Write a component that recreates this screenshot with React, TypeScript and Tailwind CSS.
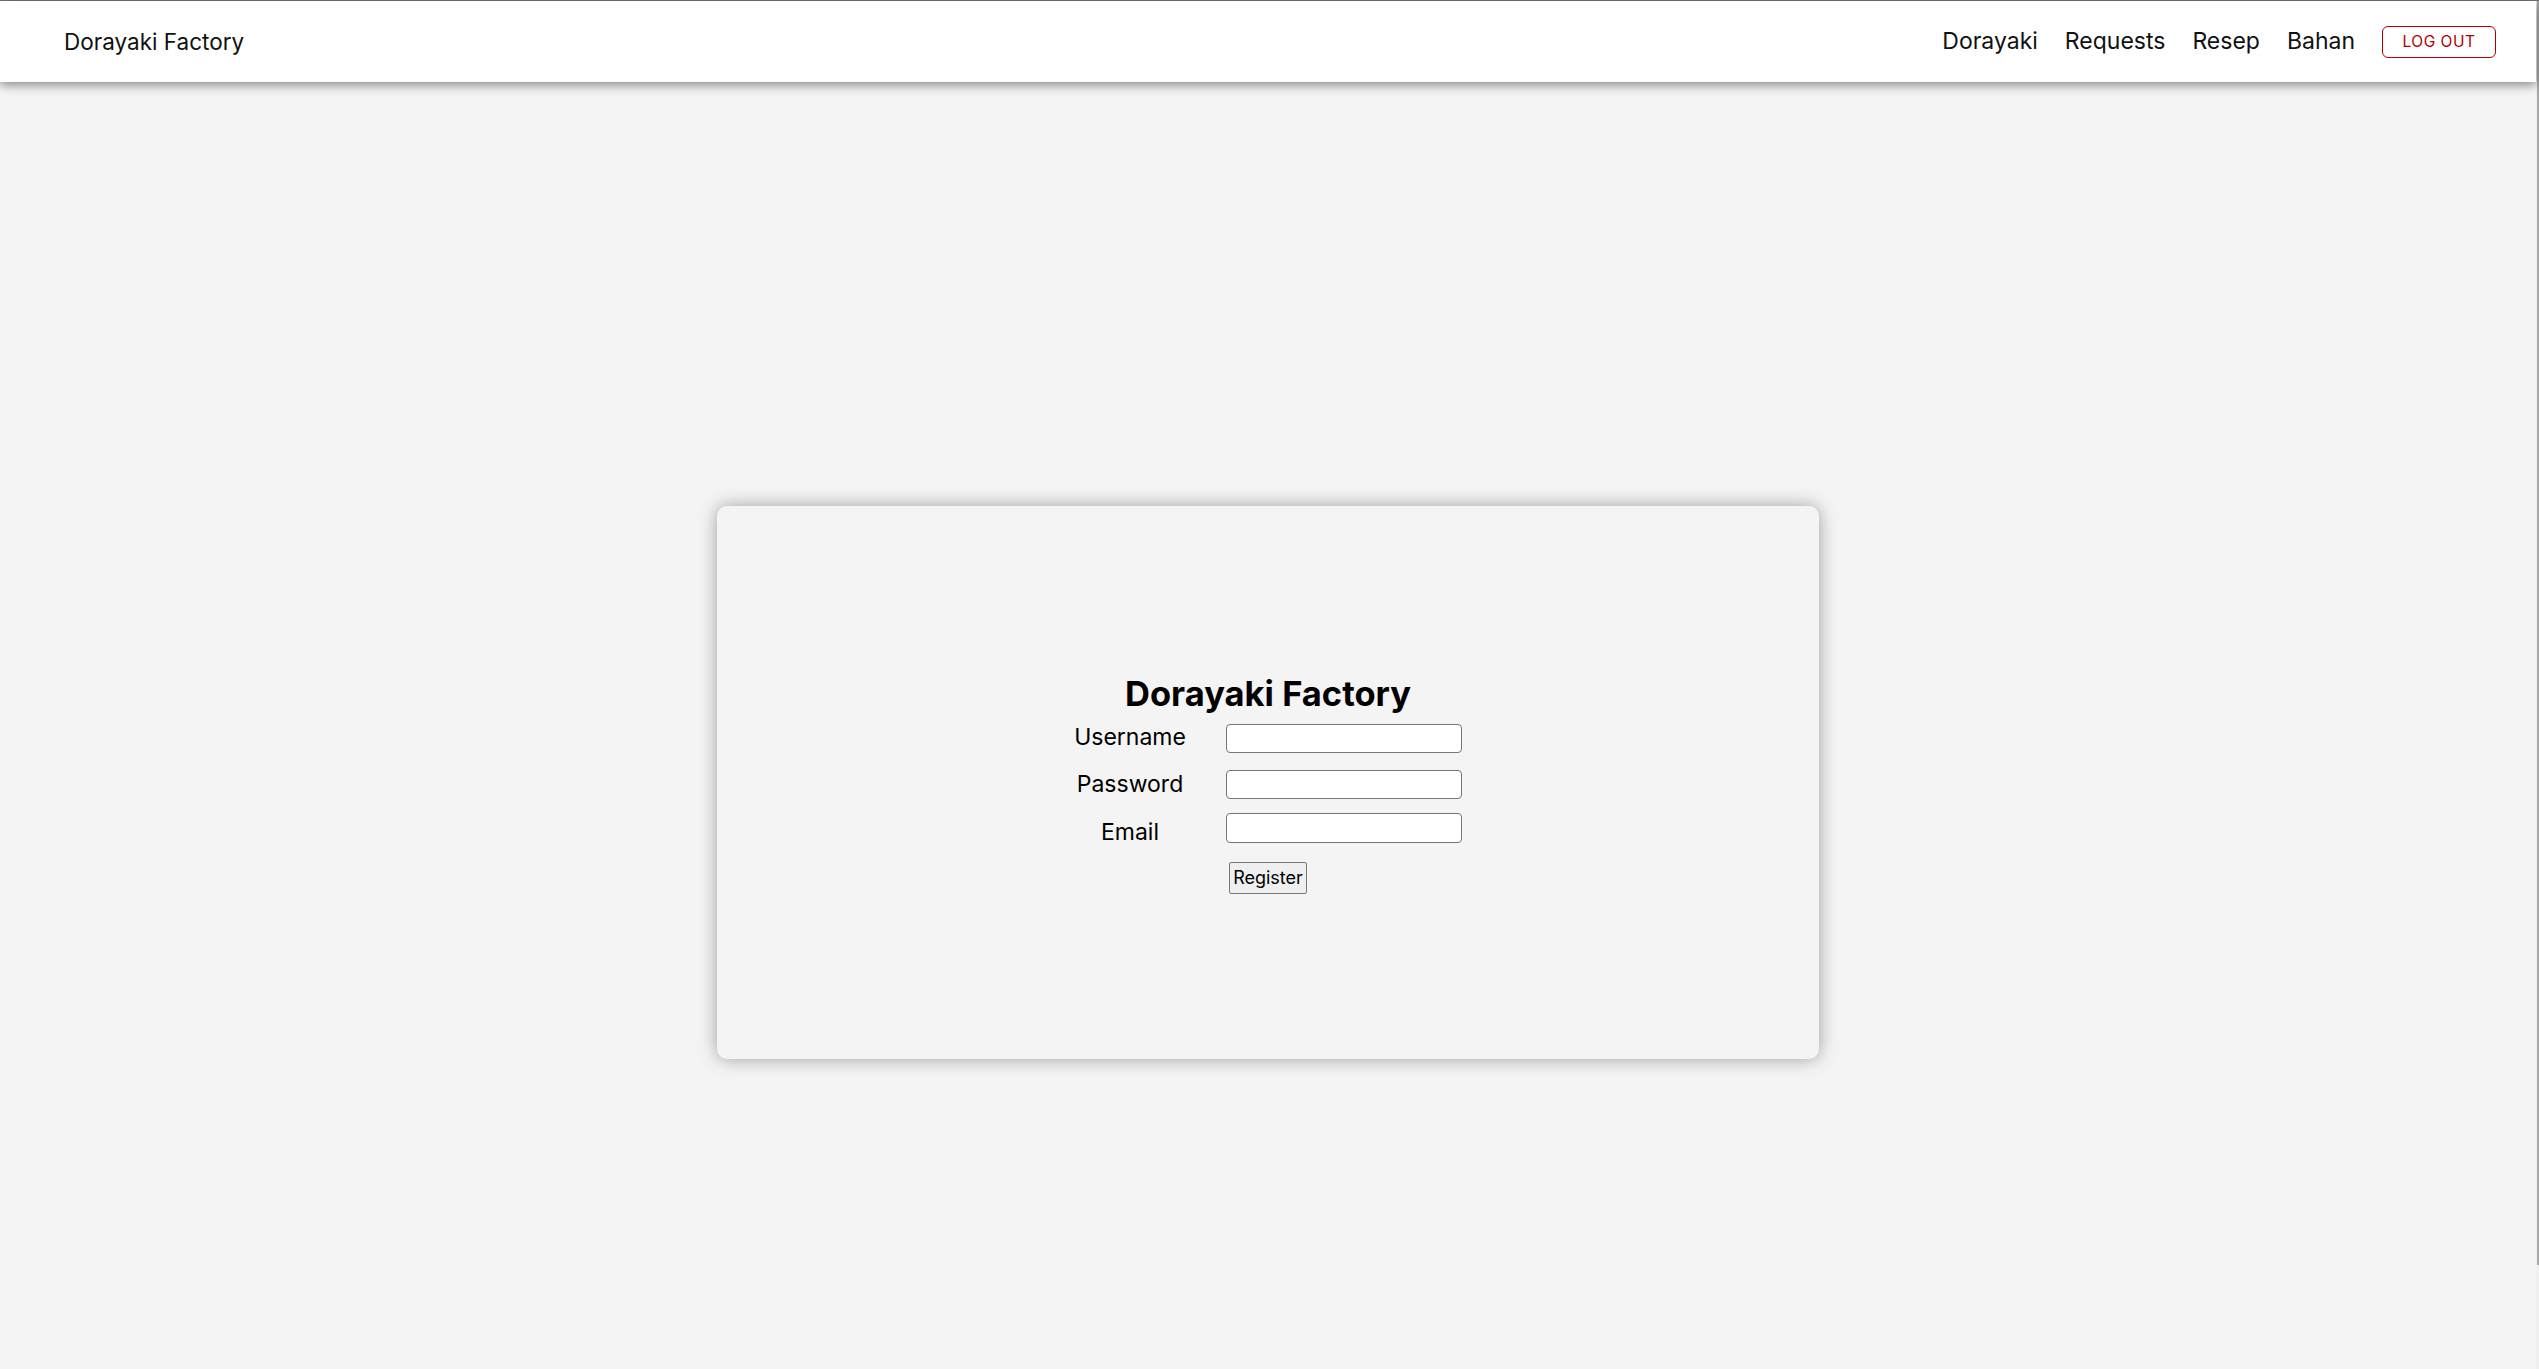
import React from "react";

const font = { fontFamily: "Inter, 'Noto Sans', sans-serif" };

function NavBar() {
  return (
    <nav className="relative z-10 flex h-[81px] items-center justify-between bg-white pl-[64px] pr-[40px] shadow-[0_3px_10px_rgba(0,0,0,0.45)]">
      <span className="text-[22.5px] text-[#111]">Dorayaki Factory</span>
      <div className="flex items-center gap-[27px] text-[23px] text-[#111]">
        <a>Dorayaki</a>
        <a>Requests</a>
        <a>Resep</a>
        <a>Bahan</a>
        <button className="flex h-[32px] w-[114px] items-center justify-center rounded-[6px] border border-[#b00000] text-[15.5px] tracking-[0.5px] text-[#b00000]">
          LOG OUT
        </button>
      </div>
    </nav>
  );
}

function RegisterCard() {
  return (
    <div className="flex h-[553px] w-[1102px] flex-col items-center justify-center rounded-[10px] bg-[#f4f4f4] pt-[2px] shadow-[0_0_18px_rgba(0,0,0,0.35)]">
      <h1 className="text-[34.5px] font-bold leading-[40px] text-black">Dorayaki Factory</h1>
      <div className="mr-[22px] mt-[10px] grid w-[410px] grid-cols-[156px_236px] gap-x-[18px] gap-y-[14px] text-[23px] text-black">
        <label className="mb-[5px] self-center text-center leading-[27px]">Username</label>
        <input className="h-[29px] rounded-[4px] border border-[#767676] bg-white" />
        <label className="self-center text-center leading-[27px]">Password</label>
        <input type="password" className="h-[29px] rounded-[4px] border border-[#767676] bg-white" />
        <label className="mt-[6px] self-center text-center leading-[27px]">Email</label>
        <input className="h-[30px] rounded-[4px] border border-[#767676] bg-white" />
        <div />
        <div className="mt-[2px] pl-[3px]">
          <button className="flex h-[32px] w-[78px] items-center justify-center rounded-[2px] border border-[#767676] bg-[#efefef] text-[18px] text-black">
            Register
          </button>
        </div>
      </div>
    </div>
  );
}

export default function App() {
  return (
    <div style={font} className="flex min-h-screen border-t border-[#6b787f] bg-[#f4f4f4]">
      <div className="flex min-w-0 flex-1 flex-col">
        <NavBar />
        <main className="flex justify-center pt-[424px]">
          <RegisterCard />
        </main>
      </div>
      <div className="w-[3px] bg-[#f0f0f0]">
        <div className="ml-[1px] h-[1264px] w-[2px] bg-[#a9a9a9]" />
      </div>
    </div>
  );
}
